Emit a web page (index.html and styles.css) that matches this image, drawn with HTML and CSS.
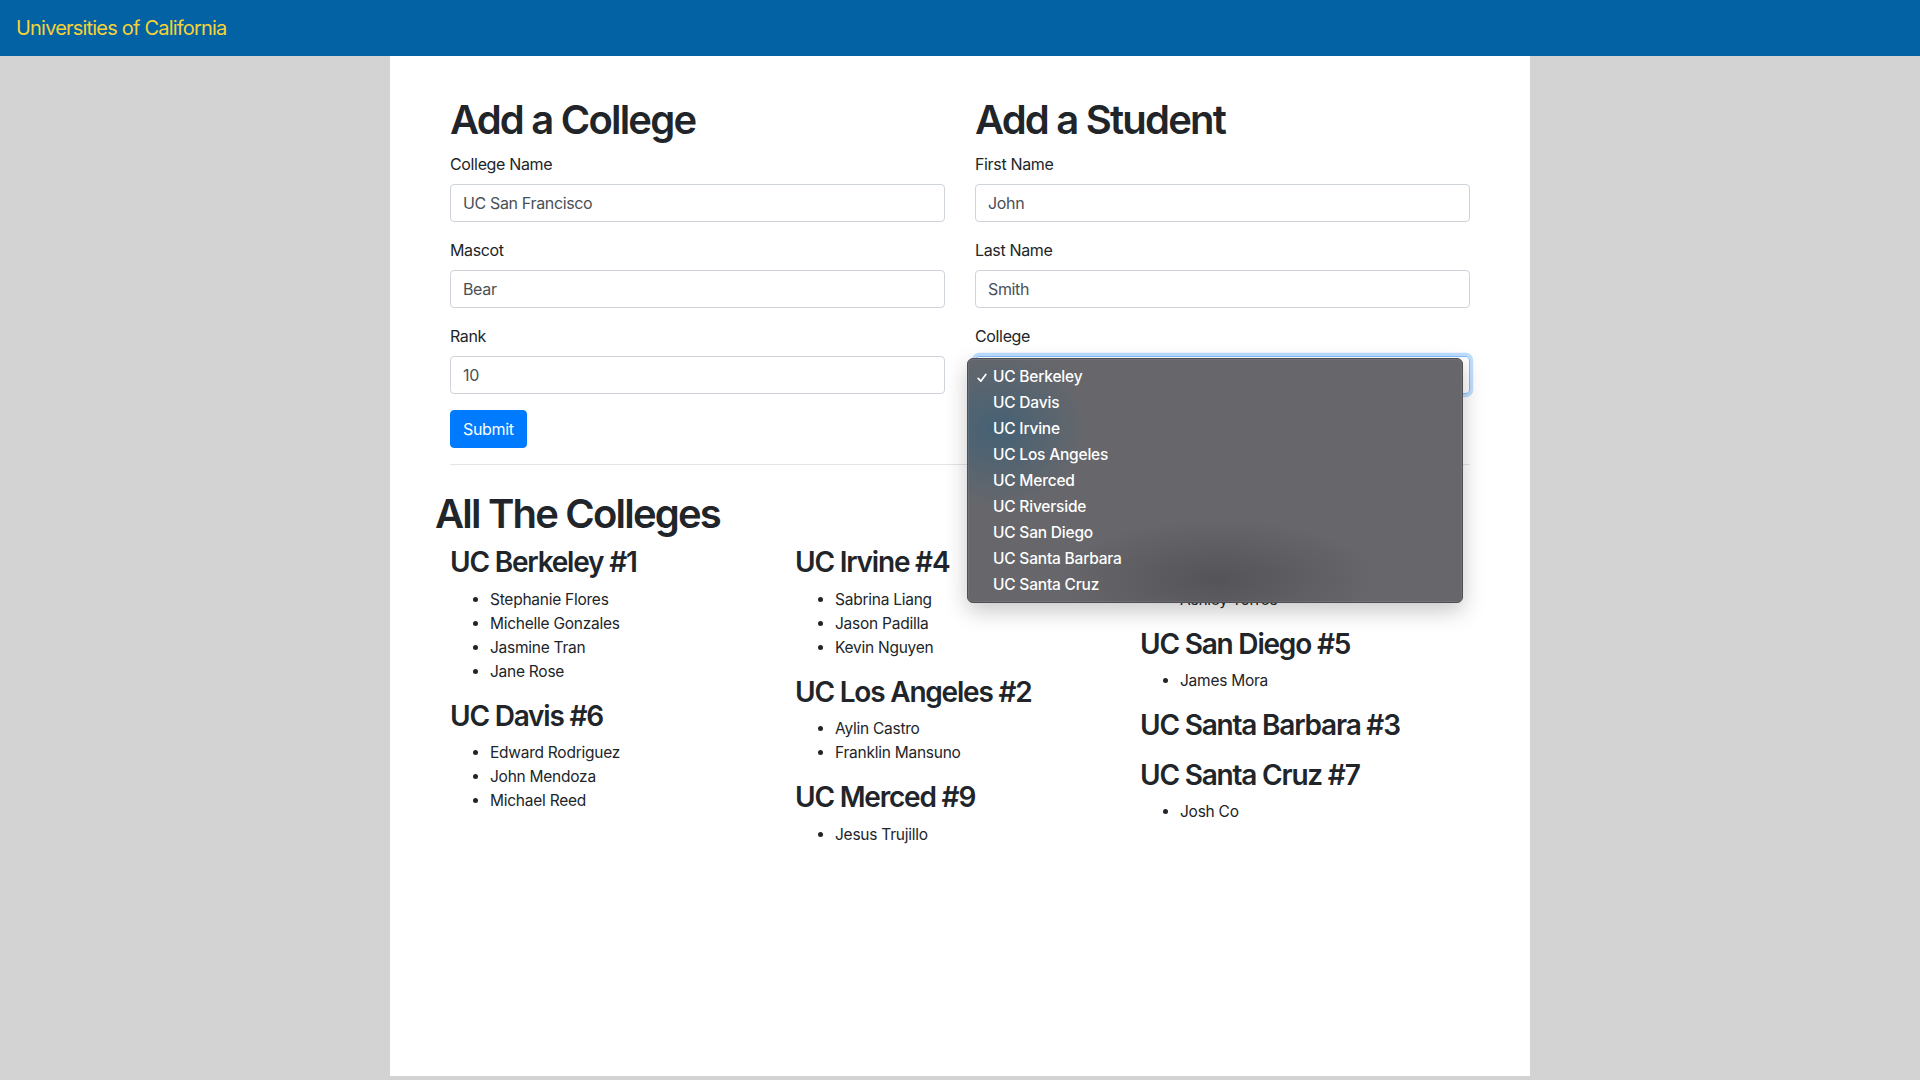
FILE: index.html
```html
<!DOCTYPE html>
<html lang="en">
<head>
<meta charset="utf-8">
<title>Universities of California</title>
<link rel="stylesheet" href="styles.css">
</head>
<body>
<nav class="navbar">
  <a class="brand" href="#">Universities of California</a>
</nav>
<main class="page">
  <div class="forms">
    <section class="form-col">
      <h1>Add a College</h1>
      <div class="group">
        <label>College Name</label>
        <div class="input">UC San Francisco</div>
      </div>
      <div class="group">
        <label>Mascot</label>
        <div class="input">Bear</div>
      </div>
      <div class="group">
        <label>Rank</label>
        <div class="input">10</div>
      </div>
      <button class="btn" type="button">Submit</button>
    </section>
    <section class="form-col">
      <h1>Add a Student</h1>
      <div class="group">
        <label>First Name</label>
        <div class="input">John</div>
      </div>
      <div class="group">
        <label>Last Name</label>
        <div class="input">Smith</div>
      </div>
      <div class="group">
        <label>College</label>
        <div class="select-wrap">
          <div class="input select focused">
            <svg class="chev" width="8" height="6" viewBox="0 0 8 6"><path d="M1 1.5 L4 4.5 L7 1.5" fill="none" stroke="#343a40" stroke-width="1.4"/></svg>
          </div>
          <ul class="menu">
            <li class="checked"><svg class="check" width="10" height="10" viewBox="0 0 10 10"><path d="M1.2 5.4 L3.8 8.2 L8.8 1.4" fill="none" stroke="#fff" stroke-width="1.7" stroke-linecap="round" stroke-linejoin="round"/></svg>UC Berkeley</li>
            <li>UC Davis</li>
            <li>UC Irvine</li>
            <li>UC Los Angeles</li>
            <li>UC Merced</li>
            <li>UC Riverside</li>
            <li>UC San Diego</li>
            <li>UC Santa Barbara</li>
            <li>UC Santa Cruz</li>
          </ul>
        </div>
      </div>
    </section>
  </div>
  <hr>
  <section class="colleges">
    <h1>All The Colleges</h1>
    <div class="college-grid">
      <div class="college-col">
        <h3>UC Berkeley #1</h3>
        <ul class="students">
          <li>Stephanie Flores</li>
          <li>Michelle Gonzales</li>
          <li>Jasmine Tran</li>
          <li>Jane Rose</li>
        </ul>
        <h3>UC Davis #6</h3>
        <ul class="students">
          <li>Edward Rodriguez</li>
          <li>John Mendoza</li>
          <li>Michael Reed</li>
        </ul>
      </div>
      <div class="college-col">
        <h3>UC Irvine #4</h3>
        <ul class="students">
          <li>Sabrina Liang</li>
          <li>Jason Padilla</li>
          <li>Kevin Nguyen</li>
        </ul>
        <h3>UC Los Angeles #2</h3>
        <ul class="students">
          <li>Aylin Castro</li>
          <li>Franklin Mansuno</li>
        </ul>
        <h3>UC Merced #9</h3>
        <ul class="students">
          <li>Jesus Trujillo</li>
        </ul>
      </div>
      <div class="college-col">
        <h3>UC Riverside #8</h3>
        <ul class="students">
          <li>Ashley Torres</li>
        </ul>
        <h3>UC San Diego #5</h3>
        <ul class="students">
          <li>James Mora</li>
        </ul>
        <h3>UC Santa Barbara #3</h3>
        <ul class="students"></ul>
        <h3>UC Santa Cruz #7</h3>
        <ul class="students">
          <li>Josh Co</li>
        </ul>
      </div>
    </div>
  </section>
</main>
</body>
</html>
```
FILE: styles.css
```css
html, body {
  margin: 0;
  padding: 0;
}
body {
  background: #d3d3d3;
  font-family: Inter, "Liberation Sans", Arial, sans-serif;
  color: #212529;
  font-size: 16px;
  font-weight: 430;
  line-height: 1.5;
}
.navbar {
  height: 56px;
  background: #0262a3;
  padding: 0 16px;
  display: flex;
  align-items: center;
}
.brand {
  font-size: 20px;
  line-height: 30px;
  color: #f5d238;
  text-decoration: none;
  letter-spacing: -0.8px;
}
.page {
  width: 1140px;
  height: 1020px;
  margin: 0 auto;
  background: #fff;
  box-sizing: border-box;
  padding: 40px 60px 0;
}
.forms {
  display: grid;
  grid-template-columns: 1fr 1fr;
  column-gap: 30px;
}
h1 {
  font-size: 40px;
  font-weight: 580;
  line-height: 1.2;
  margin: 0 0 8px;
  letter-spacing: -1.8px;
}
h3 {
  font-size: 28px;
  font-weight: 580;
  line-height: 1.2;
  margin: 0 0 8px;
  letter-spacing: -1.2px;
}
.group {
  margin-bottom: 16px;
}
label {
  display: block;
  margin-bottom: 8px;
  line-height: 24px;
  letter-spacing: -0.35px;
}
.input {
  height: 38px;
  box-sizing: border-box;
  border: 1px solid #ced4da;
  border-radius: 4px;
  padding: 6px 12px;
  line-height: 24px;
  color: #495057;
  letter-spacing: -0.35px;
}
.btn {
  display: block;
  height: 38px;
  background: #007bff;
  color: #fff;
  border: 1px solid #007bff;
  border-radius: 4px;
  padding: 6px 12px;
  font-family: inherit;
  font-size: 16px;
  font-weight: 430;
  line-height: 24px;
  letter-spacing: -0.35px;
}
hr {
  margin: 16px 0;
  border: 0;
  border-top: 1px solid rgba(0, 0, 0, 0.1);
}
.select-wrap {
  position: relative;
}
.select {
  display: flex;
  align-items: center;
  justify-content: flex-end;
}
.focused {
  border-color: #80bdff;
  box-shadow: 0 0 0 3.2px rgba(0, 123, 255, 0.25);
}
.chev {
  margin-right: -4px;
}
.menu {
  position: absolute;
  left: -8px;
  top: 2px;
  width: 496px;
  box-sizing: border-box;
  margin: 0;
  padding: 5px 0 4px;
  list-style: none;
  border-radius: 6px;
  border: 1px solid #4e4e52;
  background:
    radial-gradient(ellipse 90px 80px at 30px 70px, rgba(40, 92, 125, 0.55), rgba(40, 92, 125, 0) 100%),
    radial-gradient(ellipse 160px 60px at 250px 220px, rgba(60, 60, 66, 0.45), rgba(60, 60, 66, 0) 100%),
    #67676b;
  box-shadow: 0 8px 22px rgba(0, 0, 0, 0.22), inset 0 0 0 1px rgba(255, 255, 255, 0.08);
  z-index: 10;
}
.menu li {
  position: relative;
  height: 26px;
  line-height: 26px;
  padding-left: 25px;
  color: #fff;
  font-size: 15.5px;
  font-weight: 500;
  letter-spacing: -0.2px;
}
.check {
  position: absolute;
  left: 9px;
  top: 9px;
}
.colleges {
  margin-left: -15px;
  padding-top: 9px;
}
.college-grid {
  display: grid;
  grid-template-columns: repeat(3, 345px);
  padding-left: 15px;
}
.students {
  margin: 0 0 16px;
  padding-left: 40px;
  font-size: 15.5px;
  line-height: 24px;
  letter-spacing: -0.25px;
}
```
